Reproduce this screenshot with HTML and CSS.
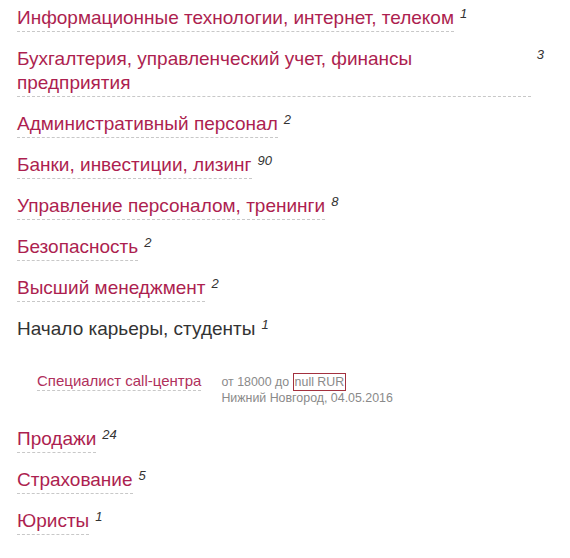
FILE: index.html
```html
<!DOCTYPE html>
<html lang="ru">
<head>
<meta charset="utf-8">
<title>Вакансии</title>
<link rel="stylesheet" href="styles.css">
</head>
<body>
<ul class="cats">
  <li class="cat"><a class="cat-link" href="#">Информационные технологии, интернет, телеком</a><span class="count">1</span></li>
  <li class="cat cat-wide"><a class="cat-link" href="#">Бухгалтерия, управленческий учет, финансы<br>предприятия</a><span class="count">3</span></li>
  <li class="cat"><a class="cat-link" href="#">Административный персонал</a><span class="count">2</span></li>
  <li class="cat"><a class="cat-link" href="#">Банки, инвестиции, лизинг</a><span class="count">90</span></li>
  <li class="cat"><a class="cat-link" href="#">Управление персоналом, тренинги</a><span class="count">8</span></li>
  <li class="cat"><a class="cat-link" href="#">Безопасность</a><span class="count">2</span></li>
  <li class="cat"><a class="cat-link" href="#">Высший менеджмент</a><span class="count">2</span></li>
  <li class="cat-open">
    <div class="cat"><span class="cat-title">Начало карьеры, студенты</span><span class="count">1</span></div>
    <ul class="jobs">
      <li class="job">
        <a class="job-link" href="#">Специалист call-центра</a>
        <div class="job-meta">
          <div>от 18000 до <span class="salary-hl">null RUR</span></div>
          <div>Нижний Новгород, 04.05.2016</div>
        </div>
      </li>
    </ul>
  </li>
  <li class="cat"><a class="cat-link" href="#">Продажи</a><span class="count">24</span></li>
  <li class="cat"><a class="cat-link" href="#">Страхование</a><span class="count">5</span></li>
  <li class="cat"><a class="cat-link" href="#">Юристы</a><span class="count">1</span></li>
</ul>
</body>
</html>
```

FILE: styles.css
```css
html, body {
  margin: 0;
  padding: 0;
  background: #ffffff;
}

body {
  font-family: "Liberation Sans", Arial, sans-serif;
  color: #333333;
}

.cats {
  list-style: none;
  margin: 0;
  padding: 6px 0 0 17px;
  width: 527px;
  display: flex;
  flex-direction: column;
  gap: 15px;
}

.cat {
  display: flex;
  align-items: flex-start;
}

.cat-link,
.cat-title {
  font-size: 19px;
  line-height: 24px;
  padding-bottom: 1px;
  border-bottom: 1px dashed #c8c8c8;
  color: #ad1f50;
  text-decoration: none;
}

.cat-title {
  color: #333333;
  border-bottom-color: transparent;
}

.cat-wide .cat-link {
  flex: 1;
}

.count {
  margin-left: 6px;
  margin-top: 0;
  font-size: 13px;
  line-height: 15px;
  font-style: italic;
  color: #333333;
}

.jobs {
  list-style: none;
  margin: 29px 0 6px 0;
  padding: 0 0 0 20px;
}

.job {
  display: flex;
  align-items: baseline;
  gap: 20px;
}

.job-link {
  font-size: 15px;
  line-height: 18px;
  color: #b0305c;
  text-decoration: none;
  border-bottom: 1px dashed #c8c8c8;
}

.job-meta {
  font-size: 12.4px;
  line-height: 16px;
  color: #8a8a8a;
}

.salary-hl {
  border: 1px solid #a3313f;
  padding: 1px 1px;
}
```
